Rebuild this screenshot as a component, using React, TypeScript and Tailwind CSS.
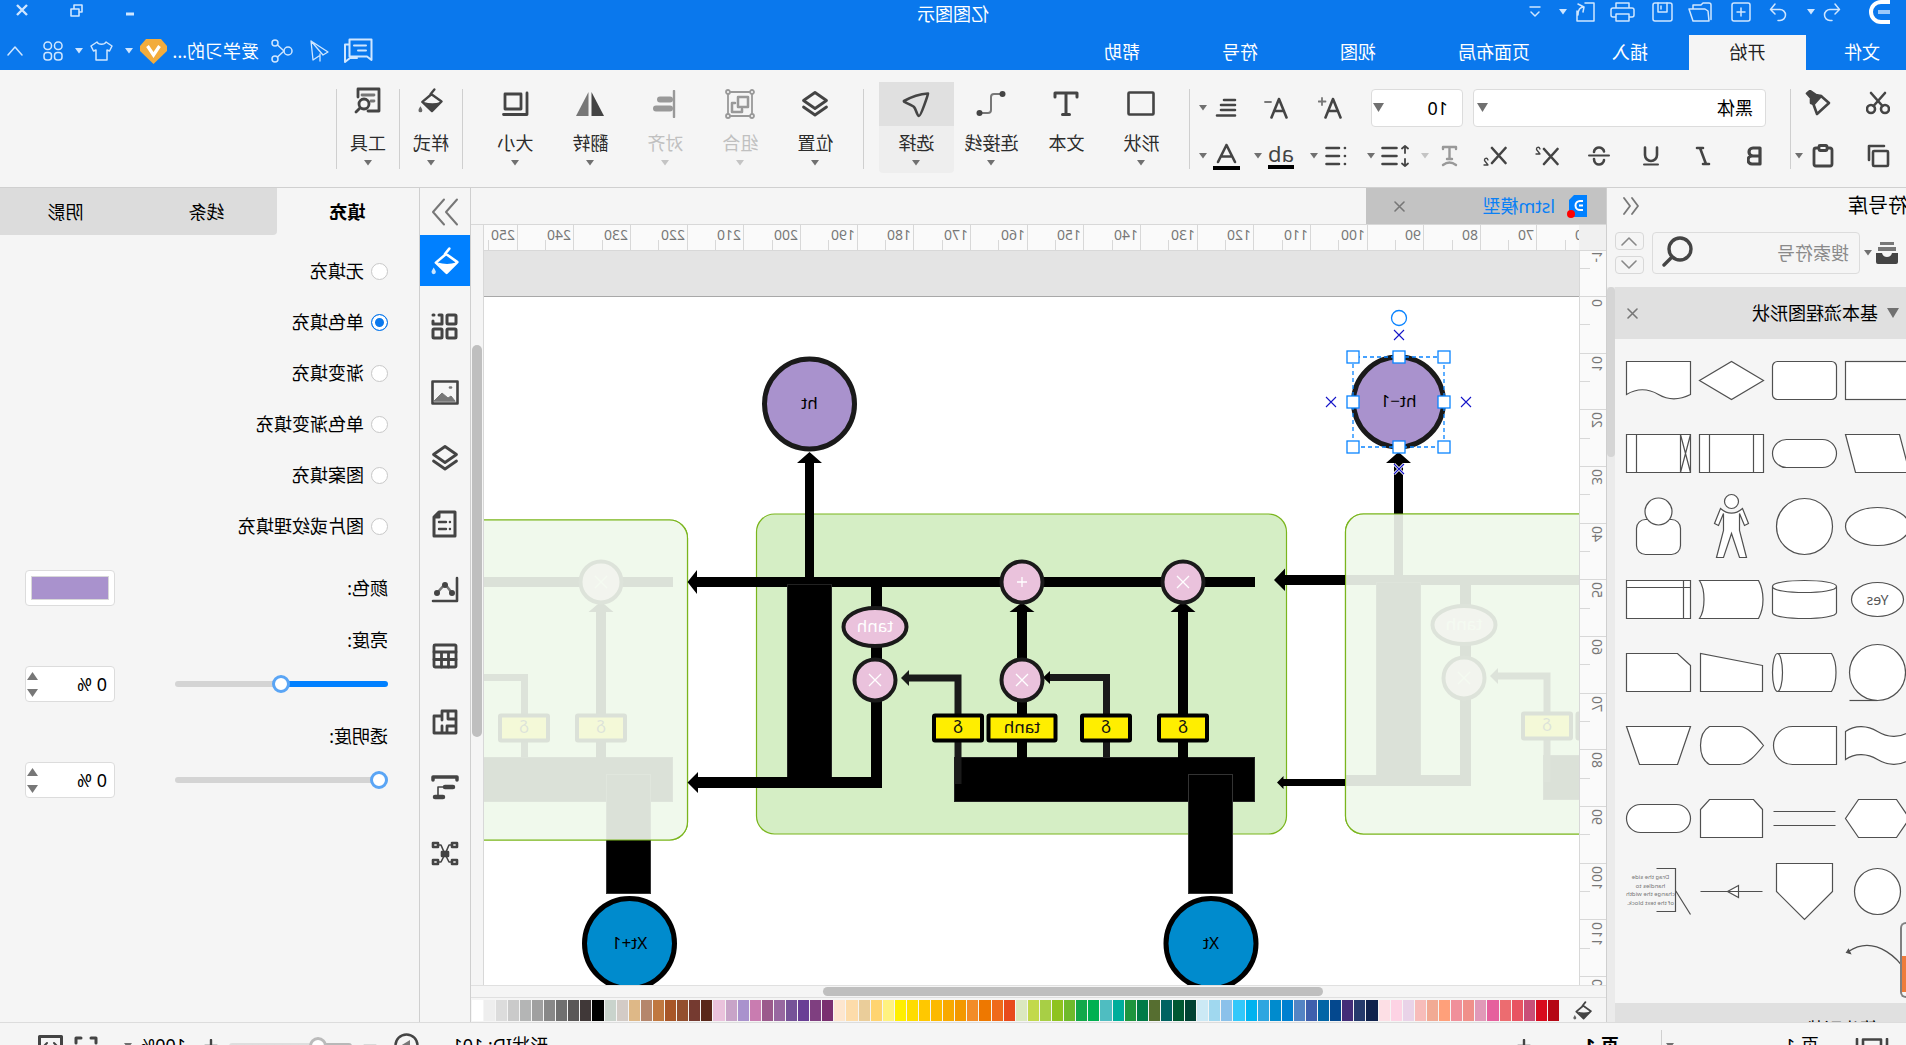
import { useState } from 'react';
import type { ReactNode } from 'react';

const tabs = ['插入', '页面布局', '视图', '符号', '帮助'];

const fillModes = ['无填充', '单色填充', '渐变填充', '单色渐变填充', '图案填充', '图片或纹理填充'];

const palette = [
  '#b50714', '#d80b1d', '#c94f78', '#e85462', '#ec6c70', '#e6609d', '#e199b8', '#f0908a', '#f0909a', '#ffa07a',
  '#f1aa94', '#f7bcba', '#e9d3e8', '#fdd3e4', '#fddfe5', '#10224d', '#253a6c', '#432d78', '#04488e', '#0266a6',
  '#3f5fad', '#5484c4', '#0080d0', '#008bcd', '#2ea6e0', '#00b2ef', '#33c8fa', '#8bc1ea', '#a0d8ef', '#cce9f5',
  '#004233', '#005731', '#006261', '#566e30', '#007b47', '#1e953e', '#00ae9b', '#4fbdc1', '#00b050', '#12a84a',
  '#6fba2c', '#8fc31f', '#a8cf45', '#c2d94c', '#dbe8c0', '#e84a1c', '#ef6a1a', '#ee7800', '#f28c28', '#f39800',
  '#f8a900', '#fcb900', '#ffc800', '#ffdc00', '#ffee00', '#fff280', '#ffd470', '#eacd9a', '#fddcaa', '#fde6cf',
  '#7a3070', '#7f3f80', '#693f95', '#765398', '#9868a0', '#9b5a8c', '#c97cb0', '#a992cd', '#c8a4c8', '#eac2dc',
  '#5a281a', '#753a30', '#934f2f', '#a85628', '#c07840', '#b5866c', '#deb887', '#d3cbc6', '#c9d3cc', '#000000',
  '#403838', '#5a5858', '#707070', '#888888', '#a0a0a0', '#b4b5b5', '#cacaca', '#dcdcdc', '#eeeeee', '#ffffff',
];

// Ruler scale: one unit of ten on the page
const STEP = 56.66;

interface IconProps {
  w?: number;
  h?: number;
  sw?: number;
  className?: string;
  children: ReactNode;
}

const Icon = ({ w = 24, h = 24, sw = 2, className, children }: IconProps) => (
  <svg
    width={w}
    height={h}
    viewBox={`0 0 ${w} ${h}`}
    fill="none"
    stroke="currentColor"
    strokeWidth={sw}
    strokeLinecap="round"
    strokeLinejoin="round"
    className={className}
    aria-hidden="true"
  >
    {children}
  </svg>
);

const Caret = ({ className = 'text-[#707070]' }: { className?: string }) => (
  <svg width="8" height="6" viewBox="0 0 8 6" className={`shrink-0 ${className}`} aria-hidden="true">
    <path d="M0 0h8L4 5.5z" fill="currentColor" />
  </svg>
);

const BucketIcon = ({ size = 26 }: { size?: number }) => (
  <svg width={size} height={size} viewBox="0 0 26 26" fill="none" aria-hidden="true">
    <path d="M9 1.500l4 5M12 6.500l9.500 8-10 9.500L1.500 14z" stroke="currentColor" strokeWidth="2.400" strokeLinejoin="round" strokeLinecap="round" />
    <path d="M2.500 14.500Q11 17 20 14.500L11.500 24z" fill="currentColor" />
    <path d="M23.500 19c1.500 2.500 2 3.200 2 4.300a2 2 0 0 1-4 0c0-1.100.5-1.800 2-4.300z" fill="currentColor" opacity=".8" />
  </svg>
);

const LayersIcon = () => (
  <Icon w={28} h={28} sw={2.8}>
    <path d="M14 2.500l11.500 8L14 18.500 2.500 10.500z" />
    <path d="M2.500 17L14 25l11.500-8" />
  </Icon>
);

/* ---------- title bar ---------- */

const TitleBar = () => (
  <div className="flex h-[35px] items-start justify-between text-[#cfe6ff]">
    <div className="flex h-6 flex-1 items-center pl-4">
      <svg width="22" height="24" viewBox="0 0 22 24" fill="none" aria-hidden="true">
        <path d="M0 2h9a10 10 0 0 1 0 20H0" stroke="#fff" strokeWidth="4" />
        <path d="M0 12h12" stroke="#9cc9fa" strokeWidth="4" />
      </svg>
      <button className="ml-[27px]" aria-label="撤销">
        <Icon w={18} h={20} sw={1.5}><path d="M6 2L1.500 7.500 6 12M1.500 7.500H11a5.500 5.500 0 0 1 0 11H9" /></Icon>
      </button>
      <Caret className="ml-[8px] text-[#cfe6ff]" />
      <button className="ml-[20px]" aria-label="重做">
        <Icon w={18} h={20} sw={1.5}><path d="M12 2l4.500 5.500L12 12M16.500 7.500H7a5.500 5.500 0 0 0 0 11h2" /></Icon>
      </button>
      <button className="ml-[18px]" aria-label="新建">
        <Icon w={20} h={20} sw={1.5}><rect x="1" y="1" width="18" height="18" rx="2" /><path d="M10 6v8M6 10h8" /></Icon>
      </button>
      <button className="ml-[19px]" aria-label="打开">
        <Icon w={24} h={20} sw={1.5}><path d="M1 17.500V3a2 2 0 0 1 2-2h6l2 2h8v4M3 19h16l4-12H7L4 9z" /></Icon>
      </button>
      <button className="ml-[15px]" aria-label="保存">
        <Icon w={21} h={20} sw={1.5}><rect x="1" y="1" width="19" height="18" rx="2" /><path d="M6 1v9h9V1M12 4v3" /></Icon>
      </button>
      <button className="ml-[17px]" aria-label="打印">
        <Icon w={25} h={20} sw={1.5}><path d="M6 6V1h13v5M6 15H3a2 2 0 0 1-2-2V8a2 2 0 0 1 2-2h19a2 2 0 0 1 2 2v5a2 2 0 0 1-2 2h-3M6 12h13v7H6z" /></Icon>
      </button>
      <button className="ml-[15px]" aria-label="导出">
        <Icon w={20} h={20} sw={1.5}><path d="M10 1H1v18h17V9M17 2l-6 3 1 5M11 5c4 0 6 3 6 8" /></Icon>
      </button>
      <Caret className="ml-[8px] text-[#cfe6ff]" />
      <button className="ml-[18px]" aria-label="更多">
        <Icon w={12} h={14} sw={1.5}><path d="M1 2h10M2 7l4 4 4-4" /></Icon>
      </button>
    </div>
    <div className="h-[28px] text-[18px] leading-[28px] text-white">亿图图示</div>
    <div className="flex h-5 flex-1 items-center justify-end gap-[42px] pr-4">
      <button aria-label="最小化"><Icon w={10} h={12} sw={3}><path d="M1 10h8" strokeLinecap="butt" /></Icon></button>
      <button aria-label="还原">
        <Icon w={13} h={13} sw={1.6}><path d="M1 5h8v7H1zM4 5V1h8v7H9" strokeLinecap="butt" transform="matrix(-1 0 0 1 13 0)" /></Icon>
      </button>
      <button aria-label="关闭"><Icon w={12} h={12} sw={2.4}><path d="M1 1l10 10M11 1L1 11" strokeLinecap="butt" /></Icon></button>
    </div>
  </div>
);

const MenuTabs = () => (
  <nav className="flex h-[35px] items-end justify-between text-[18px] text-white">
    <div className="flex h-full">
      <button className="w-[100px] pl-[26px] text-left">文件</button>
      <button className="w-[117px] bg-[#f5f5f5] text-[#222]">开始</button>
      {tabs.map((tab) => (
        <button key={tab} className="px-[41px]">{tab}</button>
      ))}
    </div>
    <div className="flex h-[38px] items-center pr-[7px] text-[#cfe6ff]">
      <button aria-label="消息">
        <Icon w={30} h={26} sw={2}><path d="M1.500 1.500h22v17H6l-4.500 3.500zM7 7.500h12M7 12.500h8" /><path d="M24 6.500h4V24l-5-4h-7" /></Icon>
      </button>
      <button className="ml-[14px]" aria-label="发送">
        <Icon w={20} h={22} sw={1.3}><path d="M18 1L1 12l5 3 12-14-2 19-6-4M9 14v7" /></Icon>
      </button>
      <button className="ml-[16px]" aria-label="分享">
        <Icon w={22} h={24} sw={1.5}><circle cx="5" cy="12" r="4" /><circle cx="18" cy="4" r="3" /><circle cx="18" cy="20" r="3" /><path d="M9 12l6.500-6M9 12l6.500 6" /></Icon>
      </button>
      <span className="ml-[12px] w-[86px] whitespace-nowrap text-white">爱学习的...</span>
      <svg width="27" height="25" viewBox="0 0 27 25" className="ml-[6px]" aria-hidden="true">
        <path d="M6 0h15l6 7v5L13.500 25 0 12V7z" fill="#f2ac3d" />
        <path d="M7.500 7l6 9 6-9" fill="none" stroke="#fff" strokeWidth="3.200" />
      </svg>
      <Caret className="ml-[7px] text-[#cfe6ff]" />
      <button className="ml-[12px]" aria-label="主题">
        <Icon w={23} h={20} sw={1.5}><path d="M7 1L1 5l2.500 5L6 9v10h11V9l2.500 1L22 5l-6-4c-1.500 3-7.500 3-9 0z" /></Icon>
      </button>
      <Caret className="ml-[7px] text-[#cfe6ff]" />
      <button className="ml-[12px]" aria-label="应用">
        <Icon w={20} h={20} sw={1.5}>
          <rect x="1" y="1" width="7.500" height="7.500" rx="3.500" /><rect x="11.500" y="1" width="7.500" height="7.500" rx="3.500" />
          <rect x="1" y="11.500" width="7.500" height="7.500" rx="3" /><rect x="11.500" y="11.500" width="7.500" height="7.500" rx="3" />
        </Icon>
      </button>
      <button className="ml-[20px]" aria-label="收起功能区">
        <Icon w={16} h={12} sw={1.5}><path d="M1 10l7-8 7 8" /></Icon>
      </button>
    </div>
  </nav>
);

/* ---------- ribbon ---------- */

const Divider = () => <div className="mt-[19px] h-20 w-px shrink-0 bg-[#cfcfcf]" />;

interface ToolProps {
  label: string;
  icon: ReactNode;
  active?: boolean;
  disabled?: boolean;
  menu?: boolean;
  className?: string;
}

const Tool = ({ label, icon, active, disabled, menu = true, className = 'w-[75px]' }: ToolProps) => (
  <button
    disabled={disabled}
    className={`mt-[12px] flex h-[91px] shrink-0 flex-col items-center rounded-sm ${className} ${active ? 'bg-[#eeeeee]' : ''} ${disabled ? 'text-[#c0c0c0]' : 'text-[#2c2c2c]'}`}
  >
    <span className={`flex h-11 w-full items-center justify-center ${active ? 'bg-[#e0e0e0]' : ''} ${disabled ? 'text-[#999]' : 'text-[#444]'}`}>{icon}</span>
    <span className="h-[34px] text-[18px] leading-[35px]">{label}</span>
    {menu && <Caret className={disabled ? 'text-[#c4c4c4]' : 'text-[#707070]'} />}
  </button>
);

const FormatButton = ({ label, className = 'w-[52px] justify-center', children }: { label: string; className?: string; children: ReactNode }) => (
  <button aria-label={label} className={`flex h-7 shrink-0 items-center ${className}`}>{children}</button>
);

const Ribbon = () => (
  <div className="flex h-[118px] items-start border-b border-[#d0d0d0] bg-[#f5f5f5] text-[#444]">
    <div className="flex w-[115px] shrink-0 flex-col gap-[27px] pt-[20px]">
      <div className="flex h-[26px] items-center pl-4">
        <button aria-label="剪切">
          <Icon w={24} h={24} sw={2.6}><circle cx="5" cy="18" r="4" /><circle cx="19" cy="18" r="4" /><path d="M19 2L7.500 15M5 2l11.500 13" /></Icon>
        </button>
        <button className="ml-[35px]" aria-label="格式刷">
          <Icon w={26} h={26} sw={2.6}><path d="M2 13l8-7 8 7-4 11z" /><path d="M10 6l5-1 6-4 3 2.500-4 4.500v5l-3 1z" fill="currentColor" /></Icon>
        </button>
      </div>
      <div className="flex h-[26px] items-center pl-4">
        <button aria-label="复制">
          <Icon w={23} h={24} sw={2.6}><rect x="2" y="7" width="15" height="15" rx="1" /><path d="M6 2h15v14" /></Icon>
        </button>
        <button className="ml-[33px]" aria-label="粘贴">
          <Icon w={22} h={24} sw={2.8}><rect x="2" y="4" width="18" height="18" rx="2" /><rect x="7" y="1.500" width="8" height="5" rx="1" fill="#f5f5f5" /></Icon>
        </button>
        <Caret className="ml-[9px] text-[#707070]" />
      </div>
    </div>
    <Divider />
    <div className="flex shrink-0 flex-col gap-[15px] pt-[19px]">
      <div className="flex items-center pl-6">
        <div className="relative">
          <select aria-label="字体" className="h-[38px] w-[293px] appearance-none rounded-sm border border-[#dcdcdc] bg-white px-3 text-[18px] text-black">
            <option>黑体</option>
          </select>
          <svg width="11" height="9" viewBox="0 0 11 9" className="pointer-events-none absolute right-1 top-[14px]"><path d="M0 0h11L5.500 9z" fill="#707070" /></svg>
        </div>
        <div className="relative ml-[10px]">
          <select aria-label="字号" className="h-[38px] w-[92px] appearance-none rounded-sm border border-[#dcdcdc] bg-white px-[14px] text-[18px] text-black">
            <option>10</option>
          </select>
          <svg width="11" height="9" viewBox="0 0 11 9" className="pointer-events-none absolute right-[2px] top-[14px]"><path d="M0 0h11L5.500 9z" fill="#707070" /></svg>
        </div>
        <FormatButton label="增大字号" className="ml-[14px] w-[54px] justify-center">
          <Icon w={24} h={22} sw={2.6}><path d="M1.500 20.500L9 2l7.500 18.500M4 14h10" /><path d="M20 1v7M16.500 4.500h7" strokeWidth="1.800" stroke="#777" /></Icon>
        </FormatButton>
        <FormatButton label="减小字号" className="w-[54px] justify-center">
          <Icon w={24} h={22} sw={2.6}><path d="M1.500 20.500L9 2l7.500 18.500M4 14h10" /><path d="M17 5h6" strokeWidth="1.800" stroke="#777" /></Icon>
        </FormatButton>
        <FormatButton label="对齐" className="w-[42px] justify-end pr-[8px]">
          <Icon w={22} h={20} sw={2.6}><path d="M2 2h11M2 7h14M2 12h14M2 17.500h18" /></Icon>
        </FormatButton>
        <Caret />
      </div>
      <div className="flex items-center pl-[9px]">
        <FormatButton label="加粗">
          <Icon w={16} h={20} sw={3.2}><path d="M3 2h7a4 4 0 0 1 0 8H3zM3 10h8a4 4 0 0 1 0 8H3z" /></Icon>
        </FormatButton>
        <FormatButton label="斜体">
          <Icon w={16} h={20} sw={2.6}><path d="M8 2h6M2 18h6M11 2L5 18" /></Icon>
        </FormatButton>
        <FormatButton label="下划线">
          <Icon w={18} h={20} sw={2.6}><path d="M3 1.500V9a6 6 0 0 0 12 0V1.500" /><path d="M2 18.500h14" strokeWidth="2" /></Icon>
        </FormatButton>
        <FormatButton label="删除线">
          <Icon w={22} h={20} sw={2.6}><path d="M16 6c0-3-3-4.500-5-4.500S6 3 6 5.500M6 14c0 3 3 4.500 5 4.500s5-1.500 5-5.500" /><path d="M1 9.500h20" strokeWidth="2" /></Icon>
        </FormatButton>
        <FormatButton label="上标">
          <Icon w={24} h={20} sw={2.6}><path d="M1.500 3L15 18M15 3L1.500 18" /><path d="M19 3c1-3 4-1.500 3.500.5L19 8h4" strokeWidth="1.300" /></Icon>
        </FormatButton>
        <FormatButton label="下标">
          <Icon w={24} h={20} sw={2.6}><path d="M1.500 2L15 17M15 2L1.500 17" /><path d="M19 14c1-3 4-1.500 3.500.5L19 19h4" strokeWidth="1.300" /></Icon>
        </FormatButton>
        <FormatButton label="文字效果" className="w-[34px] justify-end pr-[6px] text-[#999]">
          <Icon w={17} h={22} sw={2.4}><path d="M2 4V2h13v2M8.500 2v12M6 14h5M2 20q6.500-5 13 0" /></Icon>
        </FormatButton>
        <span className="flex w-5 justify-center"><Caret className="text-[#c4c4c4]" /></span>
        <FormatButton label="行距" className="w-10 justify-end pr-[6px]">
          <Icon w={28} h={24} sw={2.6}><path d="M12.500 4h14M12.500 12h14M12.500 20h14" /><path d="M4 9V2M1 4.500L4 2l3 2.500M4 15v7M1 19.500L4 22l3-2.500" strokeWidth="1.800" /></Icon>
        </FormatButton>
        <Caret />
        <FormatButton label="项目符号" className="w-[49px] justify-end pr-[7px]">
          <Icon w={22} h={20} sw={2.6}><path d="M8 2h12.500M8 10h12.500M8 18h12.500M2 2h.1M2 10h.1M2 18h.1" /></Icon>
        </FormatButton>
        <Caret />
        <FormatButton label="突出显示" className="w-[48px] justify-end pr-[6px]">
          <span className="flex h-[26px] w-[26px] flex-col items-center border-b-4 border-black text-[22px] leading-[20px]">ab</span>
        </FormatButton>
        <Caret />
        <FormatButton label="字体颜色" className="w-[47px] justify-end pr-[6px]">
          <Icon w={27} h={28} sw={2.6}><path d="M5 20L13.500 3 22 20M8 14.500h11" /><path d="M0 26h27" stroke="#000" strokeWidth="4" strokeLinecap="butt" /></Icon>
        </FormatButton>
        <Caret />
      </div>
    </div>
    <div className="w-[9px] shrink-0" />
    <Divider />
    <div className="flex shrink-0 pl-[10px] pr-[15px]">
      <Tool label="形状" icon={<Icon w={28} h={26} sw={2.6}><rect x="1.500" y="1.500" width="25" height="22" rx="1" /></Icon>} />
      <Tool label="文本" menu={false} icon={<Icon w={26} h={26} sw={3}><path d="M2 6V2h22v4M13 2v21M9.500 23.500h7" /></Icon>} />
      <Tool label="连接线" icon={<Icon w={30} h={28} sw={2}><path d="M5 4h7q3 0 3 3v13q0 3 3 3h7" stroke="#777" /><circle cx="3.500" cy="4" r="3" fill="#444" stroke="none" /><circle cx="26.500" cy="23" r="3" fill="#444" stroke="none" /></Icon>} />
      <Tool label="选择" active icon={<Icon w={28} h={28} sw={2.6}><path d="M2 3.500C10 4 19 7 26 11c1 1-8 4-10 6-2 2-3 9-5 9S2 4.500 2 3.500z" /></Icon>} />
    </div>
    <Divider />
    <div className="flex shrink-0 pl-[10px] pr-[15px]">
      <Tool label="位置" icon={<LayersIcon />} />
      <Tool
        label="组合"
        disabled
        icon={
          <Icon w={30} h={30} sw={1.8}>
            <path d="M3 3h24v24H3z" /><rect x="7" y="8" width="10" height="10" strokeWidth="2.500" /><path d="M20 14h3v9H13v-3" strokeWidth="2.500" />
            <circle cx="3" cy="3" r="2" fill="#f5f5f5" /><circle cx="27" cy="3" r="2" fill="#f5f5f5" /><circle cx="3" cy="27" r="2" fill="#f5f5f5" /><circle cx="27" cy="27" r="2" fill="#f5f5f5" />
          </Icon>
        }
      />
      <Tool label="对齐" disabled icon={<Icon w={24} h={28} sw={2.4}><path d="M3 1v26" /><path d="M7 9.500h10M7 18.500h14" strokeWidth="6" /></Icon>} />
      <Tool
        label="翻转"
        icon={<svg width="28" height="26" viewBox="0 0 28 26"><path d="M12.500 1v24H0z" fill="#444" /><path d="M15.500 1v24H28z" fill="#777" /></svg>}
      />
      <Tool label="大小" icon={<Icon w={28} h={26} sw={2.8}><rect x="8" y="3" width="16" height="15" /><path d="M2 2v21.500h23.500" /></Icon>} />
    </div>
    <Divider />
    <Tool label="样式" className="w-[62px]" icon={<span className="pb-2"><BucketIcon size={25} /></span>} />
    <Divider />
    <Tool label="工具" className="w-[62px]" icon={<span className="pb-2"><Icon w={28} h={28} sw={2.8}><path d="M14 25H3V3h21v8" /><path d="M8 9h12M8 15h3" stroke="#777" /><circle cx="18" cy="18" r="5" /><path d="M22 22l4 4" /></Icon></span>} />
    <Divider />
  </div>
);

/* ---------- symbol library ---------- */

const shapes: ReactNode[] = [
  <rect x="-32" y="-19" width="64" height="38" />,
  <rect x="-32" y="-19" width="64" height="38" rx="5" />,
  <path d="M-32 0L0-19 32 0 0 19z" />,
  <path d="M-32-19H32V14C22 8 12 7 0 14S-22 19-32 14z" />,
  <path d="M-22-19H32L22 19H-32z" />,
  <rect x="-32" y="-14" width="64" height="28" rx="14" />,
  <path d="M-32-19H32V19H-32zM-22-19V19M22-19V19" />,
  <path d="M-32-19H32V19H-32zM-22-19V19M22-19V19M-32-19L-22 19M-22-19L-32 19" />,
  <ellipse rx="32" ry="19" />,
  <circle r="28" />,
  <>
    <path d="M-11-18C-4-12 4-12 11-18L17-3 13-1 8-13V4L15 31H8L0 7-8 31H-15L-8 4V-13L-13-1-17-3z" />
    <circle cy="-25" r="7" />
  </>,
  <>
    <rect x="-22" y="-7" width="44" height="35" rx="9" />
    <circle cy="-15" r="13.500" />
  </>,
  <>
    <ellipse rx="26" ry="17" />
    <text y="5" textAnchor="middle" fontSize="14" fill="#555" stroke="none">Yes</text>
  </>,
  <path d="M-32-13V13C-32 21 32 21 32 13V-13C32-21-32-21-32-13C-32-5 32-5 32-13" />,
  <path d="M-27-19H32C26-10 26 10 32 19H-27C-33 8-33-8-27-19z" />,
  <path d="M-32-19H32V19H-32zM-32-12H32M-25-19V19" />,
  <>
    <circle r="28" />
    <path d="M0 28H28" />
  </>,
  <>
    <path d="M27-19H-27C-33-10-33 10-27 19H27z" />
    <ellipse cx="27" rx="5" ry="19" />
  </>,
  <path d="M-31-7L31-19V19H-31z" />,
  <path d="M-32-7L-19-19H32V19H-32z" />,
  <path d="M32-14C22-21 10-20 0-14S-22-7-32-14V14C-22 21-10 20 0 14S22 7 32 14z" />,
  <path d="M-32-19H12A19 19 0 0 1 12 19H-32z" />,
  <path d="M-32 0C-24-10-16-19-8-19H22C34-12 34 12 22 19H-8C-16 19-24 10-32 0z" />,
  <path d="M-32-19H32L19 19H-19z" />,
  <path d="M-32 0L-19-19H19L32 0 19 19H-19z" />,
  <path d="M-31-7H31M-31 7H31" />,
  <path d="M-31-9L-22-19H22L31-9V19H-31z" />,
  <rect x="-32" y="-14" width="64" height="28" rx="14" />,
  <circle r="23" />,
  <path d="M-28-28H28V0L0 28-28 0z" />,
  <path d="M-31 0H31M-7-6L4 0-7 6z" />,
  <>
    <path d="M2-23H-17V20H2M-17-1L-32 23" fill="none" />
    <g fontSize="6" fill="#777" stroke="none" textAnchor="middle">
      <text x="8" y="-13">Drag the side</text>
      <text x="8" y="-4">handles to</text>
      <text x="8" y="4">change the width</text>
      <text x="8" y="13">of the text block.</text>
    </g>
  </>,
  <>
    <path d="M-36 24C-26-8 4-30 29-13" fill="none" />
    <path d="M31-12l-4 1 2-4z" fill="#444" />
  </>,
];

const SectionHeader = ({ title }: { title: string }) => (
  <div className="flex h-[52px] items-center bg-[#e0e0e0] pl-[7px] pr-3">
    <svg width="12" height="10" viewBox="0 0 12 10"><path d="M0 0h12L6 10z" fill="#707070" /></svg>
    <span className="ml-[9px] flex-1 text-[18px] text-black">{title}</span>
    <button aria-label="关闭分类" className="text-[#777]">
      <Icon w={11} h={11} sw={1.6}><path d="M1 1l9 9M10 1l-9 9" /></Icon>
    </button>
  </div>
);

const Library = () => (
  <aside className="relative flex w-[300px] shrink-0 flex-col overflow-hidden border-r border-[#cfcfcf]">
    <div className="-ml-[2px] flex h-9 shrink-0 items-center justify-between pr-[15px]">
      <h2 className="text-[20px] text-black">符号库</h2>
      <button aria-label="收起符号库" className="text-[#777]">
        <Icon w={18} h={18} sw={1.8}><path d="M8 1L2 9l6 8M16 1l-6 8 6 8" /></Icon>
      </button>
    </div>
    <div className="mt-2 flex h-[42px] shrink-0 items-center pl-2">
      <svg width="22" height="22" viewBox="0 0 22 22" aria-hidden="true">
        <path d="M4 0h14v3H4zM2 5h18v4H2z" fill="#777" />
        <path d="M0 11h6q1 4 5 4t5-4h6v9q0 2-2 2H2q-2 0-2-2z" fill="#444" />
      </svg>
      <Caret className="ml-1 text-[#707070]" />
      <div className="relative ml-1">
        <input aria-label="搜索符号" placeholder="搜索符号" className="h-[42px] w-[208px] rounded-sm border border-[#dcdcdc] bg-[#f5f5f5] pl-[10px] pr-11 text-[18px] placeholder:text-[#8a8a8a]" />
        <Icon w={32} h={32} sw={3.4} className="pointer-events-none absolute right-[10px] top-[3px] text-[#444]"><circle cx="14" cy="14" r="11" /><path d="M22 22l8 8" /></Icon>
      </div>
      <div className="ml-2 flex flex-col gap-[6px] text-[#888]">
        <button aria-label="上一个" className="flex h-[18px] w-[29px] items-center justify-center rounded-sm border border-[#d8d8d8]">
          <Icon w={16} h={10} sw={1.6}><path d="M1 9l7-7 7 7" /></Icon>
        </button>
        <button aria-label="下一个" className="flex h-[18px] w-[29px] items-center justify-center rounded-sm border border-[#d8d8d8]">
          <Icon w={16} h={10} sw={1.6}><path d="M1 1l7 7 7-7" /></Icon>
        </button>
      </div>
    </div>
    <div className="mt-[13px] flex min-h-0 flex-1">
      <div className="min-w-0 flex-1 overflow-hidden">
        <SectionHeader title="基本流程图形状" />
        <div className="-ml-2 grid w-[292px] grid-cols-4 pb-[2px] pt-[5px]">
          {shapes.map((shape, i) => (
            <svg key={i} width="73" height="73" viewBox="-36.5 -36.5 73 73" fill="#fff" stroke="#505050" strokeWidth="1.200">
              {shape}
            </svg>
          ))}
        </div>
        <SectionHeader title="箭头形状" />
      </div>
      <div className="w-2 shrink-0 bg-[#ebebeb]">
        <div className="h-[170px] rounded-full bg-[#d5d5d5]" />
      </div>
    </div>
    <div className="absolute bottom-6 left-0 h-[76px] w-[6px] rounded-r-md border-y-2 border-r-2 border-[#808080] py-8">
      <div className="h-9 bg-[#ee7c3c]" />
    </div>
  </aside>
);

/* ---------- canvas ---------- */

const Op = ({ x, y, sign }: { x: number; y: number; sign: string }) => (
  <g>
    <circle cx={x} cy={y} r="20.500" fill="#eac2dc" stroke="#1a1a1a" strokeWidth="4" />
    {sign === '+' ? (
      <path d={`M${x - 5} ${y}h10M${x} ${y - 5}v10`} stroke="#fff" strokeWidth="1.300" />
    ) : (
      <path d={`M${x - 6} ${y - 6}l12 12M${x + 6} ${y - 6}l-12 12`} stroke="#fff" strokeWidth="1.300" />
    )}
  </g>
);

const Gate = ({ x, w = 48, label }: { x: number; w?: number; label: string }) => (
  <g>
    <rect x={x - w / 2} y="715.500" width={w} height="25" rx="1" fill="#ffee00" stroke="#000" strokeWidth="4" />
    <text x={x} y="733" textAnchor="middle" fontSize="17" fill="#111">{label}</text>
  </g>
);

// One LSTM cell, without its rounded frame
const LstmCell = () => (
  <g>
    <path d="M651 577H1210V587H651zM1209 570L1218.500 582 1209 594z" />
    <rect x="1074.500" y="584.500" width="44" height="195" stroke="#222" />
    <path d="M1024 582h11v195h174v11h-185zM1208 772L1218.500 782.500 1208 793z" />
    <rect x="651.500" y="757.500" width="300" height="44" stroke="#222" />
    <path d="M718 760V610h10v150zM710.500 612L723 601.500 735.500 612z" />
    <path d="M879 760V610h10v150zM871.500 612L884 602.500 896.500 612z" />
    <path d="M799.500 757V677.500H857" fill="none" stroke="#1a1a1a" strokeWidth="7" />
    <path d="M856 671L863 677.500 856 684z" />
    <path d="M948 784V678H998" fill="none" stroke="#1a1a1a" strokeWidth="7" />
    <path d="M997 670L1005 678 997 686z" fill="#1a1a1a" />
    <rect x="673.500" y="774.500" width="44" height="119" stroke="#333" />
    <Op x={723} y={582} sign="x" />
    <Op x={884} y={582} sign="+" />
    <Op x={884} y={680} sign="x" />
    <Op x={1031} y={680} sign="x" />
    <ellipse cx="1031" cy="627" rx="31.500" ry="19" fill="#eac2dc" stroke="#1a1a1a" strokeWidth="4" />
    <text x="1031" y="632" textAnchor="middle" fontSize="17" fill="#fff">tanh</text>
    <Gate x={723} label="δ" />
    <Gate x={800} label="δ" />
    <Gate x={884} w={67} label="tanh" />
    <Gate x={948} label="δ" />
  </g>
);

const Frame = ({ x, y, w, faded }: { x: number; y: number; w: number; faded?: boolean }) => (
  <rect x={x} y={y} width={w} height="320" rx="18" fill={faded ? 'rgba(243,249,240,0.9)' : '#d5eec5'} stroke="#7ab51d" strokeWidth="1.200" />
);

const OutArrow = ({ x, bottom }: { x: number; bottom: number }) => (
  <path d={`M${x} 452l12.500 11h-8V${bottom}h-9V463h-8z`} />
);

const Node = ({ x, y, fill, stroke, label }: { x: number; y: number; fill: string; stroke: string; label: string }) => (
  <g>
    <circle cx={x} cy={y} r="45" fill={fill} stroke={stroke} strokeWidth="5" />
    <text x={x} y={y + 5} textAnchor="middle" fontSize="17" fill="#000">{label}</text>
  </g>
);

const handles = [[462, 357], [507, 357], [553, 357], [462, 402], [553, 402], [462, 447], [507, 447], [553, 447]];
const anchors = [[507, 335], [440, 402], [575, 402], [507, 469]];

const Diagram = () => (
  <svg width="1097" height="734" viewBox="327 251 1097 734" className="block" role="img" aria-label="lstm模型">
    <defs>
      <clipPath id="prev"><rect x="300" y="500" width="261" height="340" /></clipPath>
    </defs>
    <rect x="327" y="296" width="1098" height="700" fill="#fff" />
    <path d="M327 296.500H1425" stroke="#a8a8a8" />

    <OutArrow x={507.5} bottom={580} />
    <Frame x={100} y={514} w={460.500} />
    <g clipPath="url(#prev)">
      <OutArrow x={507.5} bottom={580} />
      <g transform="translate(-589 -2)"><LstmCell /></g>
    </g>
    <Frame x={100} y={514} w={460.500} faded />

    <Frame x={1218.5} y={520} w={500} />
    <g transform="translate(582 0)"><LstmCell /></g>
    <Frame x={1218.5} y={520} w={500} faded />

    <Frame x={619.5} y={514} w={530} />
    <LstmCell />
    <OutArrow x={1096.5} bottom={580} />
    <path d="M561 575H621V568.500L632 580 621 591V585H561zM561 779H622.500V776L629 782.500 622.500 789V786H561z" />

    <Node x={1096.5} y={404} fill="#a992cd" stroke="#1a1a1a" label="ht" />
    <Node x={695} y={943.5} fill="#008bcd" stroke="#000" label="Xt" />
    <Node x={1276.5} y={943.5} fill="#008bcd" stroke="#000" label="Xt+1" />

    {/* selected node */}
    <Node x={507.5} y={402} fill="#a992cd" stroke="#1a1a1a" label="ht−1" />
    <g fill="#fff" stroke="#0a84ff" strokeWidth="1.300">
      <rect x="462" y="357" width="91" height="90" fill="none" strokeDasharray="4 3" />
      <circle cx="507" cy="318" r="7.500" />
      {handles.map(([x, y]) => (
        <rect key={`${x}-${y}`} x={x - 6} y={y - 6} width="12" height="12" />
      ))}
    </g>
    <path d="M502 464l10 10M512 464l-10 10" stroke="#fff" strokeWidth="3" />
    {anchors.map(([x, y]) => (
      <path key={`${x}-${y}`} d={`M${x - 5} ${y - 5}l10 10M${x + 5} ${y - 5}l-10 10`} stroke="#1414c8" strokeWidth="1.100" />
    ))}
  </svg>
);

const Canvas = () => {
  const columns = Array.from({ length: 21 }, (_, i) => 50 + i * 10);
  const rows = Array.from({ length: 14 }, (_, i) => -10 + i * 10);

  return (
    <section className="flex min-w-0 flex-1 flex-col border-r border-[#cfcfcf]">
      <div className="flex h-9 shrink-0">
        <div className="flex w-60 items-center bg-[#c3c3c3] pl-[18px] pr-7">
          <svg width="21" height="24" viewBox="0 0 21 24" aria-hidden="true">
            <path d="M1 1h13l5 5v17H1z" fill="#0080ff" />
            <path d="M5 7h3a4.500 4.500 0 0 1 0 9H5M5 11.500h4" fill="none" stroke="#fff" strokeWidth="2" />
            <circle cx="17" cy="20" r="4" fill="#f00" />
          </svg>
          <span className="ml-[12px] flex-1 text-[18px] text-[#0a80f5]">lstm模型</span>
          <button aria-label="关闭文档" className="text-[#777]">
            <Icon w={11} h={11} sw={1.6}><path d="M1 1l9 9M10 1l-9 9" /></Icon>
          </button>
        </div>
      </div>
      <div className="flex min-h-0 flex-1">
        <div className="flex min-w-0 flex-1 flex-col overflow-hidden">
          <div className="flex h-[27px] shrink-0 border-y border-[#d8d8d8] bg-[#fafafa]">
            <div className="w-[27px] shrink-0 bg-[#f0f0f0]" />
            <div className="relative flex-1 overflow-hidden text-[14px] leading-[19px] text-[#777]">
              {columns.map((v) => (
                <div key={v} className="absolute inset-y-0 border-l border-[#d8d8d8] pl-[2px]" style={{ left: Math.round(41.5 + ((v - 70) / 10) * STEP) }}>
                  {v}
                </div>
              ))}
              {columns.map((v) => (
                <div key={v} className="absolute bottom-0 h-[10px] border-l border-[#d8d8d8]" style={{ left: Math.round(41.5 + ((v - 65) / 10) * STEP) }} />
              ))}
            </div>
          </div>
          <div className="flex min-h-0 flex-1">
            <div className="relative w-[27px] shrink-0 overflow-hidden border-r border-[#d8d8d8] bg-[#fafafa] text-[14px] leading-[18px] text-[#777]">
              {rows.map((v) => (
                <div key={v} className="absolute inset-x-0 border-t border-[#d8d8d8] pt-[2px]" style={{ top: Math.round(45 + (v / 10) * STEP) }}>
                  <span className="block w-[18px] rotate-180 text-right [writing-mode:vertical-rl]">{v}</span>
                </div>
              ))}
              {rows.map((v) => (
                <div key={v} className="absolute right-0 w-[10px] border-t border-[#d8d8d8]" style={{ top: Math.round(45 + ((v + 5) / 10) * STEP) }} />
              ))}
            </div>
            <div className="min-w-0 flex-1 overflow-hidden bg-[#e4e4e4]">
              <Diagram />
            </div>
          </div>
        </div>
        <div className="w-[13px] shrink-0 border-l border-t border-[#d8d8d8] px-px pt-[120px]">
          <div className="h-[392px] rounded-full bg-[#bfbfbf]" />
        </div>
      </div>
      <div className="flex h-[13px] shrink-0 items-center justify-end border-y border-[#e0e0e0]">
        <div className="mr-[352px] h-[9px] w-[500px] rounded-full bg-[#bfbfbf]" />
      </div>
      <div className="flex h-6 shrink-0 items-center pl-[14px] text-[#444]">
        <BucketIcon size={19} />
        <div className="ml-[14px] flex flex-1 gap-px">
          {palette.map((color, i) => (
            <button key={i} aria-label={color} className="h-[21px] flex-1" style={{ backgroundColor: color }} />
          ))}
        </div>
      </div>
    </section>
  );
};

/* ---------- side rail ---------- */

const railIcons: { label: string; icon: ReactNode }[] = [
  {
    label: '主题',
    icon: (
      <Icon sw={3} w={27} h={27}>
        <rect x="2" y="2" width="9" height="9" rx="1" /><rect x="2" y="16" width="9" height="9" rx="1" /><rect x="16" y="16" width="9" height="9" rx="1" />
        <path d="M19 2h-3v9h9V8M24 2h1" />
      </Icon>
    ),
  },
  { label: '图片', icon: <Icon sw={2.6} w={28} h={25}><rect x="1.500" y="1.500" width="25" height="22" /><path d="M4 21l4-5 3 2 6-5 8 8z" fill="#777" stroke="#777" strokeWidth="1" /><path d="M8 7.500h1" stroke="#777" /></Icon> },
  { label: '图层', icon: <LayersIcon /> },
  { label: '文档', icon: <Icon sw={3} w={25} h={28}><path d="M2 2h16l5 5v19H2zM18 2v5h5z" /><path d="M7 12h.1M7 19h.1M11 12h7M11 19h7" strokeWidth="2.400" /></Icon> },
  { label: '图表', icon: <Icon sw={2.6} w={28} h={28}><path d="M2 2v23h24" /><path d="M7 17l7-9 8 9" stroke="#777" /><circle cx="7" cy="17" r="3" fill="#444" stroke="none" /><circle cx="14" cy="9" r="3" fill="#444" stroke="none" /><circle cx="22" cy="17" r="3" fill="#444" stroke="none" /></Icon> },
  { label: '表格', icon: <Icon sw={2.8} w={26} h={26}><rect x="2" y="2" width="22" height="22" rx="1" /><path d="M2 9h22M2 16.500h22M9.500 9v15M16.500 9v15" /></Icon> },
  { label: '平面图', icon: <Icon sw={2.8} w={26} h={26}><path d="M2 2h14v5h8v17H2zM2 10h8V2M16 24v-7M2 17h9v7M16 7v4" /></Icon> },
  { label: '甘特图', icon: <Icon sw={2.4} w={28} h={26}><path d="M2 5V2h24v3" strokeWidth="3.500" /><path d="M6 12h8M16 22h8" strokeWidth="4.500" /><path d="M14 12h7v9" strokeWidth="1.600" /></Icon> },
  { label: '关系图', icon: <Icon sw={2.6} w={28} h={26}><rect x="2" y="2" width="5" height="4" /><rect x="21" y="2" width="5" height="4" /><rect x="2" y="19" width="5" height="4" /><rect x="21" y="19" width="5" height="4" /><rect x="11" y="11" width="6" height="4" fill="#444" /><path d="M7 4h3l3 7M21 4h-3l-3 7M7 21h3l3-6M21 21h-3l-3-6" strokeWidth="1.600" /></Icon> },
];

const Rail = () => (
  <div className="flex w-[51px] shrink-0 flex-col border-r border-[#cfcfcf] text-[#444]">
    <button aria-label="收起面板" className="flex h-[47px] items-center justify-center text-[#777]">
      <Icon w={28} h={28} sw={2}><path d="M2 1.500L13 14 2 26.500M15 1.500L26 14 15 26.500" /></Icon>
    </button>
    <button aria-label="填充样式" className="mb-[7px] flex h-[51px] items-center justify-center bg-[#0080ff] text-white">
      <BucketIcon size={28} />
    </button>
    {railIcons.map(({ label, icon }) => (
      <button key={label} aria-label={label} className="flex h-[66px] items-center justify-center">{icon}</button>
    ))}
  </div>
);

/* ---------- properties ---------- */

interface PercentRowProps {
  id: string;
  label: string;
  thumb: number;
  filled: boolean;
}

const PercentRow = ({ id, label, thumb, filled }: PercentRowProps) => {
  const [pos, setPos] = useState(thumb);
  return (
    <>
      <label htmlFor={id} className="mt-[21px] block h-[26px] text-[18px] leading-[26px]">{label}</label>
      <div className="mt-[13px] flex h-9 items-center">
        <input
          id={id}
          type="range"
          min={0}
          max={100}
          value={pos}
          onChange={(e) => setPos(Number(e.target.value))}
          className="h-[6px] w-[213px] appearance-none rounded-full [&::-webkit-slider-thumb]:size-[18px] [&::-webkit-slider-thumb]:appearance-none [&::-webkit-slider-thumb]:rounded-full [&::-webkit-slider-thumb]:border-3 [&::-webkit-slider-thumb]:border-[#5aa5f5] [&::-webkit-slider-thumb]:bg-white"
          style={{ background: `linear-gradient(to right, #0080ff ${filled ? pos : 0}%, #d4d4d4 ${filled ? pos : 0}%)` }}
        />
        <div className="relative ml-[60px]">
          <input aria-label={`${label}数值`} defaultValue="0 %" className="h-9 w-[90px] rounded-sm border border-[#dcdcdc] bg-white pl-[7px] pr-6 text-[18px]" />
          <div className="absolute right-[2px] top-[6px] flex flex-col gap-[9px]">
            <button aria-label="增加"><svg width="11" height="8" viewBox="0 0 11 8" className="block"><path d="M0 8h11L5.500 0z" fill="#777" /></svg></button>
            <button aria-label="减少"><svg width="11" height="8" viewBox="0 0 11 8" className="block"><path d="M0 0h11L5.500 8z" fill="#777" /></svg></button>
          </div>
        </div>
      </div>
    </>
  );
};

const Properties = () => {
  const [mode, setMode] = useState('单色填充');

  return (
    <aside className="flex w-[419px] shrink-0 flex-col overflow-hidden pl-px text-black">
      <div className="flex h-[47px] shrink-0 text-[18px]">
        <button className="w-[141px] shrink-0 pt-[2px] font-bold">填充</button>
        <div className="flex min-w-0 flex-1 rounded-bl bg-[#dcdcdc] pt-[2px]">
          <button className="w-[141px] shrink-0">线条</button>
          <button className="w-[141px] shrink-0">阴影</button>
        </div>
      </div>
      <div className="pl-[30px] pr-[25px] pt-[11px]">
        {fillModes.map((name) => (
          <label key={name} className="flex h-[51px] items-center text-[18px]">
            <input
              type="radio"
              name="fill"
              checked={mode === name}
              onChange={() => setMode(name)}
              className="size-[17px] appearance-none rounded-full border border-[#c8c8c8] bg-white checked:border-[#0a78ed] checked:bg-[#0a78ed] checked:shadow-[inset_0_0_0_3px_#fff]"
            />
            <span className="ml-[7px]">{name}</span>
          </label>
        ))}
        <div className="mt-[18px] flex h-9 items-center justify-between">
          <span className="text-[18px]">颜色:</span>
          <button aria-label="颜色" className="h-9 w-[90px] rounded-sm border border-[#dcdcdc] bg-white p-[5px]">
            <span className="block h-full border border-[#d8d8d8] bg-[#a992cd]" />
          </button>
        </div>
        <PercentRow id="brightness" label="亮度:" thumb={50} filled />
        <PercentRow id="opacity" label="透明度:" thumb={0} filled={false} />
      </div>
    </aside>
  );
};

/* ---------- status bar, cut by the lower edge of the window ---------- */

const StatusBar = () => (
  <footer className="-mb-[23px] flex h-[46px] shrink-0 items-center border-t border-[#dcdcdc] bg-[#f5f5f5] text-[18px] text-black">
    <button className="ml-[17px] text-[#444]" aria-label="页面视图">
      <Icon w={34} h={16} sw={2.6}><rect x="8" y="1.500" width="18" height="13" /><path d="M2 1v14M32 1v14" /></Icon>
    </button>
    <span className="ml-[36px] w-[145px]">页-1</span>
    <Caret />
    <div className="ml-[4px] h-8 w-px bg-[#d0d0d0]" />
    <button className="ml-[42px] font-bold">页-1</button>
    <button className="ml-[54px] text-[#444]" aria-label="添加页"><Icon w={14} h={14} sw={2.4}><path d="M7 1v12M1 7h12" /></Icon></button>
    <div className="flex-1" />
    <span className="w-[110px] whitespace-nowrap">形状ID: 101</span>
    <button className="ml-[19px] text-[#444]" aria-label="播放">
      <Icon w={25} h={25} sw={2.4}><circle cx="12.500" cy="12.500" r="11" /><path d="M9 7l9 5.500L9 18z" fill="#777" stroke="none" /></Icon>
    </button>
    <button className="ml-[17px] text-[#888]" aria-label="缩小"><Icon w={14} h={14} sw={2.4}><path d="M1 7h12" /></Icon></button>
    <input
      aria-label="缩放"
      type="range"
      defaultValue={24}
      className="ml-[11px] h-[6px] w-[123px] appearance-none rounded-full bg-linear-to-r from-[#b8b8b8] from-27% to-[#dedede] to-27% [&::-webkit-slider-thumb]:size-[18px] [&::-webkit-slider-thumb]:appearance-none [&::-webkit-slider-thumb]:rounded-full [&::-webkit-slider-thumb]:border-3 [&::-webkit-slider-thumb]:border-[#bbb] [&::-webkit-slider-thumb]:bg-white"
    />
    <button className="ml-[11px] text-[#444]" aria-label="放大"><Icon w={14} h={14} sw={2.4}><path d="M7 1v12M1 7h12" /></Icon></button>
    <span className="ml-[18px] w-[54px]">100%</span>
    <Caret />
    <button className="ml-[26px] text-[#444]" aria-label="全屏"><Icon w={24} h={20} sw={3}><path d="M2 7V2h5M17 2h5v5M2 13v5h5M17 18h5v-5" /></Icon></button>
    <button className="ml-[11px] mr-[38px] text-[#444]" aria-label="适应宽度"><Icon w={25} h={22} sw={3}><rect x="1.500" y="1.500" width="22" height="19" /><path d="M6 11h13M9 8l-3 3 3 3M16 8l3 3-3 3" strokeWidth="2" /></Icon></button>
  </footer>
);

// The whole window is flipped left to right
const App = () => (
  <div className="flex h-screen -scale-x-100 flex-col overflow-hidden bg-[#f5f5f5] font-['Noto_Sans','Noto_Sans_CJK_SC',sans-serif]">
    <header className="shrink-0 bg-[#0a78ed]">
      <TitleBar />
      <MenuTabs />
    </header>
    <Ribbon />
    <main className="flex min-h-0 flex-1">
      <Library />
      <Canvas />
      <Rail />
      <Properties />
    </main>
    <StatusBar />
  </div>
);

export default App;
